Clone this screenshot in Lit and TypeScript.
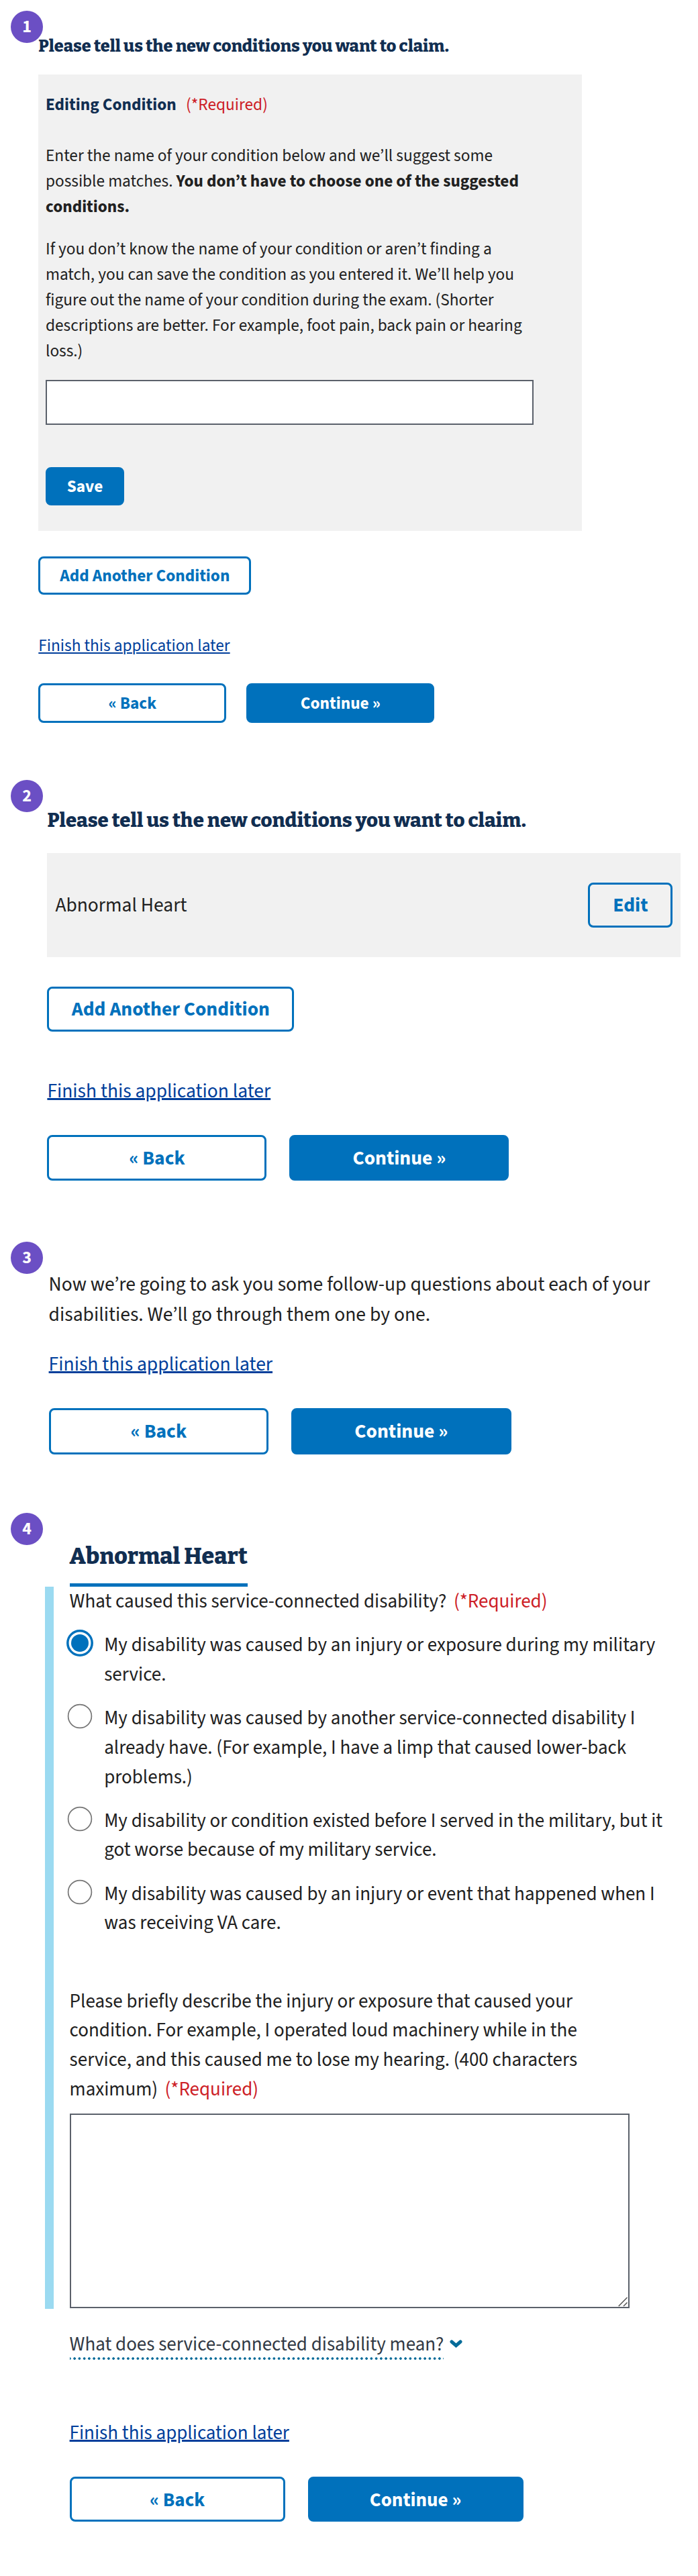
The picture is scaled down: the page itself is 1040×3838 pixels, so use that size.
import { LitElement, html, css } from "lit";
import { customElement, property } from "lit/decorators.js";

@customElement("step-badge")
class StepBadge extends LitElement {
  @property() label = "";
  static styles = css`
    :host {
      display: flex;
      align-items: center;
      justify-content: center;
      width: 48px;
      height: 48px;
      border-radius: 50%;
      background: #6b4fc4;
      color: #fff;
      font: 700 26px/48px "Source Sans 3", "Noto Sans CJK KR", sans-serif;
    }
  `;
  render() {
    return html`<span>${this.label}</span>`;
  }
}

@customElement("app-root")
class AppRoot extends LitElement {
  static styles = css`
    :host {
      display: block;
      width: 1040px;
      height: 3838px;
      background: #fff;
      color: #212121;
      font-family: "Source Sans 3", "Source Sans Pro", "Noto Sans CJK KR", sans-serif;
      white-space: nowrap;
    }
    * {
      box-sizing: border-box;
    }
    h2, h3, p {
      margin: 0;
      padding: 0;
      font-weight: 400;
    }
    section {
      position: relative;
      display: flex;
      flex-direction: column;
      align-items: flex-start;
      font-size: var(--fs);
      line-height: var(--lh);
    }
    .s1 { --fs: 25.3px; --lh: 38px; --gap: 30px; height: 1140px; padding: 48.5px 0 0 57.3px; }
    .s2 { --fs: 29.5px; --lh: 44px; --gap: 34px; height: 680px; padding: 62.5px 0 0 70.4px; }
    .s3 { --fs: 29.57px; --lh: 44.5px; --gap: 34px; height: 400px; padding: 72px 0 0 72.6px; }
    .s4 { --fs: 29.03px; --lh: 43.7px; --gap: 34px; height: 1618px; padding: 76.5px 0 0 67px; }
    step-badge { position: absolute; left: 16px; }
    .s1 step-badge { top: 16px; }
    .s2 step-badge { top: 22px; }
    .s3 step-badge { top: 30px; }
    .s4 step-badge { top: 34px; }

    .title {
      font-family: "Bitter", "DejaVu Serif Condensed", "DejaVu Serif", serif;
      font-weight: 800;
      line-height: 40px;
      color: #112e51;
    }
    .s1 .title { font-size: 25.2px; }
    .s2 .title { font-size: 29.4px; }
    .s4 .title {
      font-size: 33.9px;
      line-height: 44px;
      margin-left: 36.6px;
      padding-bottom: 18px;
      border-bottom: 5px solid #0071bc;
    }
    .req { color: #cd2026; margin-left: 0.36em; }

    .panel { background: #f1f1f1; }
    .edit-panel {
      width: 810px;
      height: 680px;
      margin-top: 22.5px;
      padding: 26px 0 0 10.7px;
      display: flex;
      flex-direction: column;
      align-items: flex-start;
    }
    .legend b { color: #112e51; }
    .legend .req { margin-left: 0.57em; }
    .p1 { margin-top: 38px; }
    .p2 { margin-top: 25px; }
    .field {
      display: block;
      appearance: none;
      border: 2px solid #5b616b;
      border-radius: 0;
      background: #fff;
      outline: none;
      padding: 0;
      margin: 0;
    }
    .cond-input { width: 727px; height: 67px; margin-top: 24px; }

    .btn {
      appearance: none;
      display: flex;
      align-items: center;
      justify-content: center;
      margin: 0;
      padding: 3px 0 0;
      border: 3px solid #0071bc;
      border-radius: 8px;
      background: transparent;
      color: #0071bc;
      font: 700 var(--fs) / 1 "Source Sans 3", "Source Sans Pro", "Noto Sans CJK KR", sans-serif;
      white-space: nowrap;
    }
    .primary { background: #0071bc; color: #fff; }
    .save { width: 117px; height: 57px; margin-top: 63px; }
    .s1 .add { width: 317px; height: 57px; margin-top: 38px; }
    .row-panel {
      width: 944px;
      height: 155px;
      margin-top: 28.5px;
      padding: 0 12px;
      display: flex;
      align-items: center;
      justify-content: space-between;
    }
    .row-panel span { padding-top: 1px; }
    .edit { width: 126px; height: 67px; }
    .s2 .add { width: 368px; height: 67px; margin-top: 44px; }

    .finish {
      color: #003e9b;
      text-decoration: underline;
      text-decoration-thickness: 3px;
      text-underline-offset: 1px;
    }
    .s1 .finish { margin-top: 57px; text-decoration-thickness: 2px; text-underline-offset: 2px; }
    .s2 .finish { margin-top: 67px; }
    .s3 .finish { margin-top: 29.5px; }
    .s4 .finish { margin: 87px 0 0 36.6px; }
    .nav { display: flex; gap: var(--gap); }
    .s1 .nav { margin-top: 37px; }
    .s1 .nav .btn { width: 280px; height: 59px; }
    .s2 .nav { margin-top: 43px; }
    .s2 .nav .btn { width: 327px; height: 68px; }
    .s3 .nav { margin-top: 43px; }
    .s3 .nav .btn { width: 327.5px; height: 69px; }
    .s4 .nav { margin: 42.5px 0 0 36.6px; }
    .s4 .nav .btn { width: 321px; height: 67px; }

    .group {
      height: 1076px;
      border-left: 13px solid #9bdaf1;
      padding: 1.5px 0 0 23.6px;
    }
    .option { display: flex; align-items: flex-start; margin-top: 21.5px; }
    .radio { flex: none; width: 40px; height: 40px; margin: -2px 16.3px 0 -4.7px; }
    .area-label { margin-top: 72.5px; }
    .area { position: relative; margin-top: 14px; width: 834px; height: 290px; }
    .area .field { width: 834px; height: 290px; resize: none; }
    .grip { position: absolute; right: 2px; bottom: 2px; width: 16px; height: 16px; }
    .help { display: flex; align-items: flex-start; margin: 32.5px 0 0 36.6px; height: 45px; color: #323a45; }
    .help span {
      height: 43.5px;
      background: radial-gradient(circle at center, #046b99 1.5px, transparent 2.1px) 3.5px bottom / 7.257px 4px repeat-x;
    }
    .help svg { width: 20px; height: 13px; margin: 14px 0 0 9px; }
  `;

  private options = [
    ["My disability was caused by an injury or exposure during my military", "service."],
    ["My disability was caused by another service-connected disability I", "already have. (For example, I have a limp that caused lower-back", "problems.)"],
    ["My disability or condition existed before I served in the military, but it", "got worse because of my military service."],
    ["My disability was caused by an injury or event that happened when I", "was receiving VA care."],
  ];

  private lines(rows: string[]) {
    return rows.map((row, i) => (i ? html`<br />${row}` : row));
  }

  private footer() {
    return html`<a class="finish">Finish this application later</a>
      <div class="nav">
        <button class="btn">« Back</button>
        <button class="btn primary">Continue »</button>
      </div>`;
  }

  private radio(checked: boolean) {
    return html`<svg class="radio" viewBox="0 0 40 40">
      <circle cx="20" cy="20" r=${checked ? 18.2 : 17.4} fill="#fff" stroke=${checked ? "#0071bc" : "#757575"} stroke-width=${checked ? 3.5 : 1.7} />
      <circle cx="20" cy="20" r=${checked ? 13 : 0} fill="#0071bc" />
    </svg>`;
  }

  render() {
    return html`
      <section class="s1">
        <step-badge label="1"></step-badge>
        <h3 class="title">Please tell us the new conditions you want to claim.</h3>
        <div class="panel edit-panel">
          <p class="legend"><b>Editing Condition</b><span class="req">(*Required)</span></p>
          <p class="p1">Enter the name of your condition below and we’ll suggest some<br />possible matches. <b>You don’t have to choose one of the suggested<br />conditions.</b></p>
          <p class="p2">If you don’t know the name of your condition or aren’t finding a<br />match, you can save the condition as you entered it. We’ll help you<br />figure out the name of your condition during the exam. (Shorter<br />descriptions are better. For example, foot pain, back pain or hearing<br />loss.)</p>
          <input class="field cond-input" />
          <button class="btn primary save">Save</button>
        </div>
        <button class="btn add">Add Another Condition</button>
        ${this.footer()}
      </section>
      <section class="s2">
        <step-badge label="2"></step-badge>
        <h3 class="title">Please tell us the new conditions you want to claim.</h3>
        <div class="panel row-panel">
          <span>Abnormal Heart</span>
          <button class="btn edit">Edit</button>
        </div>
        <button class="btn add">Add Another Condition</button>
        ${this.footer()}
      </section>
      <section class="s3">
        <step-badge label="3"></step-badge>
        <p>Now we’re going to ask you some follow-up questions about each of your<br />disabilities. We’ll go through them one by one.</p>
        ${this.footer()}
      </section>
      <section class="s4">
        <step-badge label="4"></step-badge>
        <h2 class="title">Abnormal Heart</h2>
        <div class="group">
          <p>What caused this service-connected disability?<span class="req">(*Required)</span></p>
          ${this.options.map(
            (rows, i) => html`<label class="option">${this.radio(i === 0)}<span>${this.lines(rows)}</span></label>`
          )}
          <p class="area-label">Please briefly describe the injury or exposure that caused your<br />condition. For example, I operated loud machinery while in the<br />service, and this caused me to lose my hearing. (400 characters<br />maximum)<span class="req">(*Required)</span></p>
          <div class="area">
            <textarea class="field"></textarea>
            <svg class="grip" viewBox="0 0 16 16" fill="none" stroke="#555" stroke-width="1.5"><path d="M1.7 15L14.5 2M9 15L14.5 9.5" /></svg>
          </div>
        </div>
        <div class="help">
          <span>What does service-connected disability mean?</span>
          <svg viewBox="0 0 20 13" fill="none" stroke="#046b99" stroke-width="5" stroke-linecap="round"><path d="M3 3L9.5 8.6L16 3" /></svg>
        </div>
        ${this.footer()}
      </section>
    `;
  }
}
